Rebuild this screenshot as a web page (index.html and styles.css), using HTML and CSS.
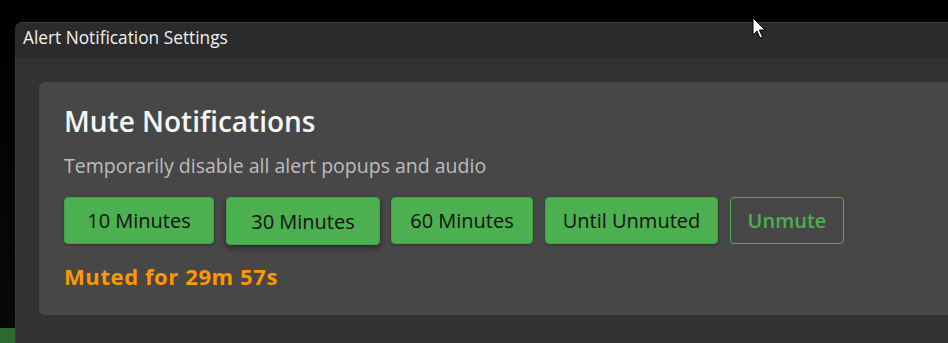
FILE: index.html
```html
<!DOCTYPE html>
<html>
<head>
<meta charset="utf-8">
<link rel="stylesheet" href="styles.css">
</head>
<body>
<div class="screen">
  <div class="desktop">
    <div class="desktop-green"></div>
  </div>
  <div class="window">
    <div class="titlebar">Alert Notification Settings</div>
    <div class="content">
      <section class="card">
        <h1 class="card-title">Mute Notifications</h1>
        <p class="card-desc">Temporarily disable all alert popups and audio</p>
        <div class="btn-row">
          <button class="btn btn-solid btn-10">10 Minutes</button>
          <button class="btn btn-solid btn-30 btn-hover">30 Minutes</button>
          <button class="btn btn-solid btn-60">60 Minutes</button>
          <button class="btn btn-solid btn-until">Until Unmuted</button>
          <button class="btn btn-outline btn-unmute">Unmute</button>
        </div>
        <div class="status">Muted for 29m 57s</div>
      </section>
    </div>
  </div>
</div>
<svg class="cursor" width="14" height="24" viewBox="0 0 14 24">
  <path d="M1 1 L1 18 L5 14 L8 21 L10.5 20 L7.5 13 L13 13 Z" fill="#fff" stroke="#000" stroke-width="1" stroke-linejoin="miter"/>
</svg>
</body>
</html>
```
FILE: styles.css
```css
html, body {
  margin: 0;
  padding: 0;
  background: #000;
  width: 948px;
  height: 343px;
  overflow: hidden;
  font-family: "Open Sans", "Noto Sans", sans-serif;
}
.screen {
  display: flex;
  height: 343px;
}
.desktop {
  width: 15px;
  flex: none;
  background: linear-gradient(#000 0, #080808 100%);
  display: flex;
  flex-direction: column;
  justify-content: flex-end;
}
.desktop-green {
  height: 15px;
  width: 16px;
  background: #2e6a2f;
}
.window {
  flex: 1;
  margin-top: 22px;
  background: #323232;
  border-top-left-radius: 8px;
  overflow: hidden;
  display: flex;
  flex-direction: column;
  box-shadow: inset 1px 1px 0 #3a3a3a;
}
.titlebar {
  height: 36px;
  flex: none;
  background: #2b2b2b;
  color: #f2f2f2;
  font-size: 17.3px;
  line-height: 30px;
  padding: 0 0 5px 8px;
  border-top: 1px solid #3a3a3a;
  box-sizing: border-box;
}
.content {
  padding: 24px 0 0 24px;
}
.card {
  background: #474747;
  border-radius: 6px 0 0 6px;
  height: 233px;
  box-sizing: border-box;
  padding: 21px 24px 0 25px;
}
.card-title {
  margin: 0;
  font-size: 28px;
  font-weight: 600;
  color: #f5f5f5;
  line-height: 36px;
}
.card-desc {
  margin: 14px 0 0;
  font-size: 19.5px;
  color: #bdbdbd;
  line-height: 25px;
}
.btn-row {
  display: flex;
  gap: 12px;
  margin-top: 19px;
}
.btn {
  font-family: inherit;
  font-size: 20px;
  height: 47px;
  padding: 0;
  border-radius: 4px;
  box-sizing: border-box;
  cursor: pointer;
  text-align: center;
  white-space: nowrap;
  flex: none;
}
.btn-10 { width: 150px; }
.btn-30 { width: 154px; height: 48px; margin-right: -1px; }
.btn-60 { width: 142px; }
.btn-until { width: 173px; }
.btn-unmute { width: 114px; }
.btn-solid {
  background: #4caf50;
  border: 1px solid #43a047;
  color: #111;
  box-shadow: 0 1px 3px rgba(0, 0, 0, 0.3);
}
.btn-hover {
  box-shadow: 0 3px 6px rgba(0, 0, 0, 0.45);
}
.btn-outline {
  background: transparent;
  border: 1.5px solid #4caf50;
  color: #4caf50;
  font-weight: 600;
}
.status {
  margin-top: 16px;
  font-size: 22px;
  letter-spacing: 0.6px;
  font-weight: 700;
  color: #ff9800;
  line-height: 30px;
}
.cursor {
  position: absolute;
  left: 752px;
  top: 17px;
}
```
